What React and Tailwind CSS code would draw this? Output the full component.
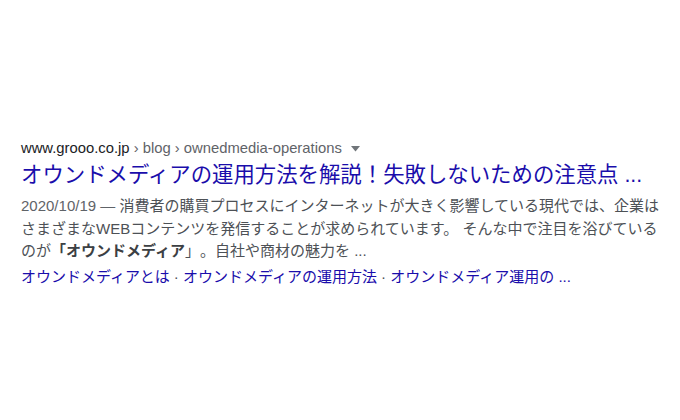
export default function App() {
  const font = { fontFamily: '"Liberation Sans", Arial, "Noto Sans CJK JP", sans-serif' };
  return (
    <div className="w-[680px] h-[420px] bg-white overflow-hidden [text-spacing-trim:space-all]" style={font}>
      <div className="pt-[138px] pl-[21px] flex flex-col">
        <div className="flex items-center h-[20px] text-[14.8px] leading-[20px] whitespace-nowrap">
          <span className="text-[#202124]">www.grooo.co.jp</span>
          <span className="text-[#5f6368]">&nbsp;› blog › ownedmedia-operations</span>
          <svg className="ml-[9px] mt-[1px]" width="9" height="6" viewBox="0 0 9 6">
            <path d="M0 0 L9 0 L4.5 5.5 Z" fill="#70757a" />
          </svg>
        </div>
        <div className="pt-[3px] text-[21.4px] leading-[28px] text-[#1a0dab] whitespace-nowrap">
          オウンドメディアの運用方法を解説！失敗しないための注意点 ...
        </div>
        <div className="mt-[6px] text-[15px] leading-[22.6px] text-[#4d5156] whitespace-nowrap">
          <div>
            <span className="text-[#5f6368]">2020/10/19 — </span>
            消費者の購買プロセスにインターネットが大きく影響している現代では、企業は
          </div>
          <div>さまざまなWEBコンテンツを発信することが求められています。 そんな中で注目を浴びている</div>
          <div>
            のが<span className="font-bold text-[#3c4043]">「オウンドメディア</span>」。自社や商材の魅力を ...
          </div>
        </div>
        <div className="mt-[3px] text-[15px] leading-[22px] text-[#1a0dab] whitespace-nowrap">
          オウンドメディアとは<span className="text-[#4d5156]"> · </span>オウンドメディアの運用方法
          <span className="text-[#4d5156]"> · </span>オウンドメディア運用の ...
        </div>
      </div>
    </div>
  );
}
